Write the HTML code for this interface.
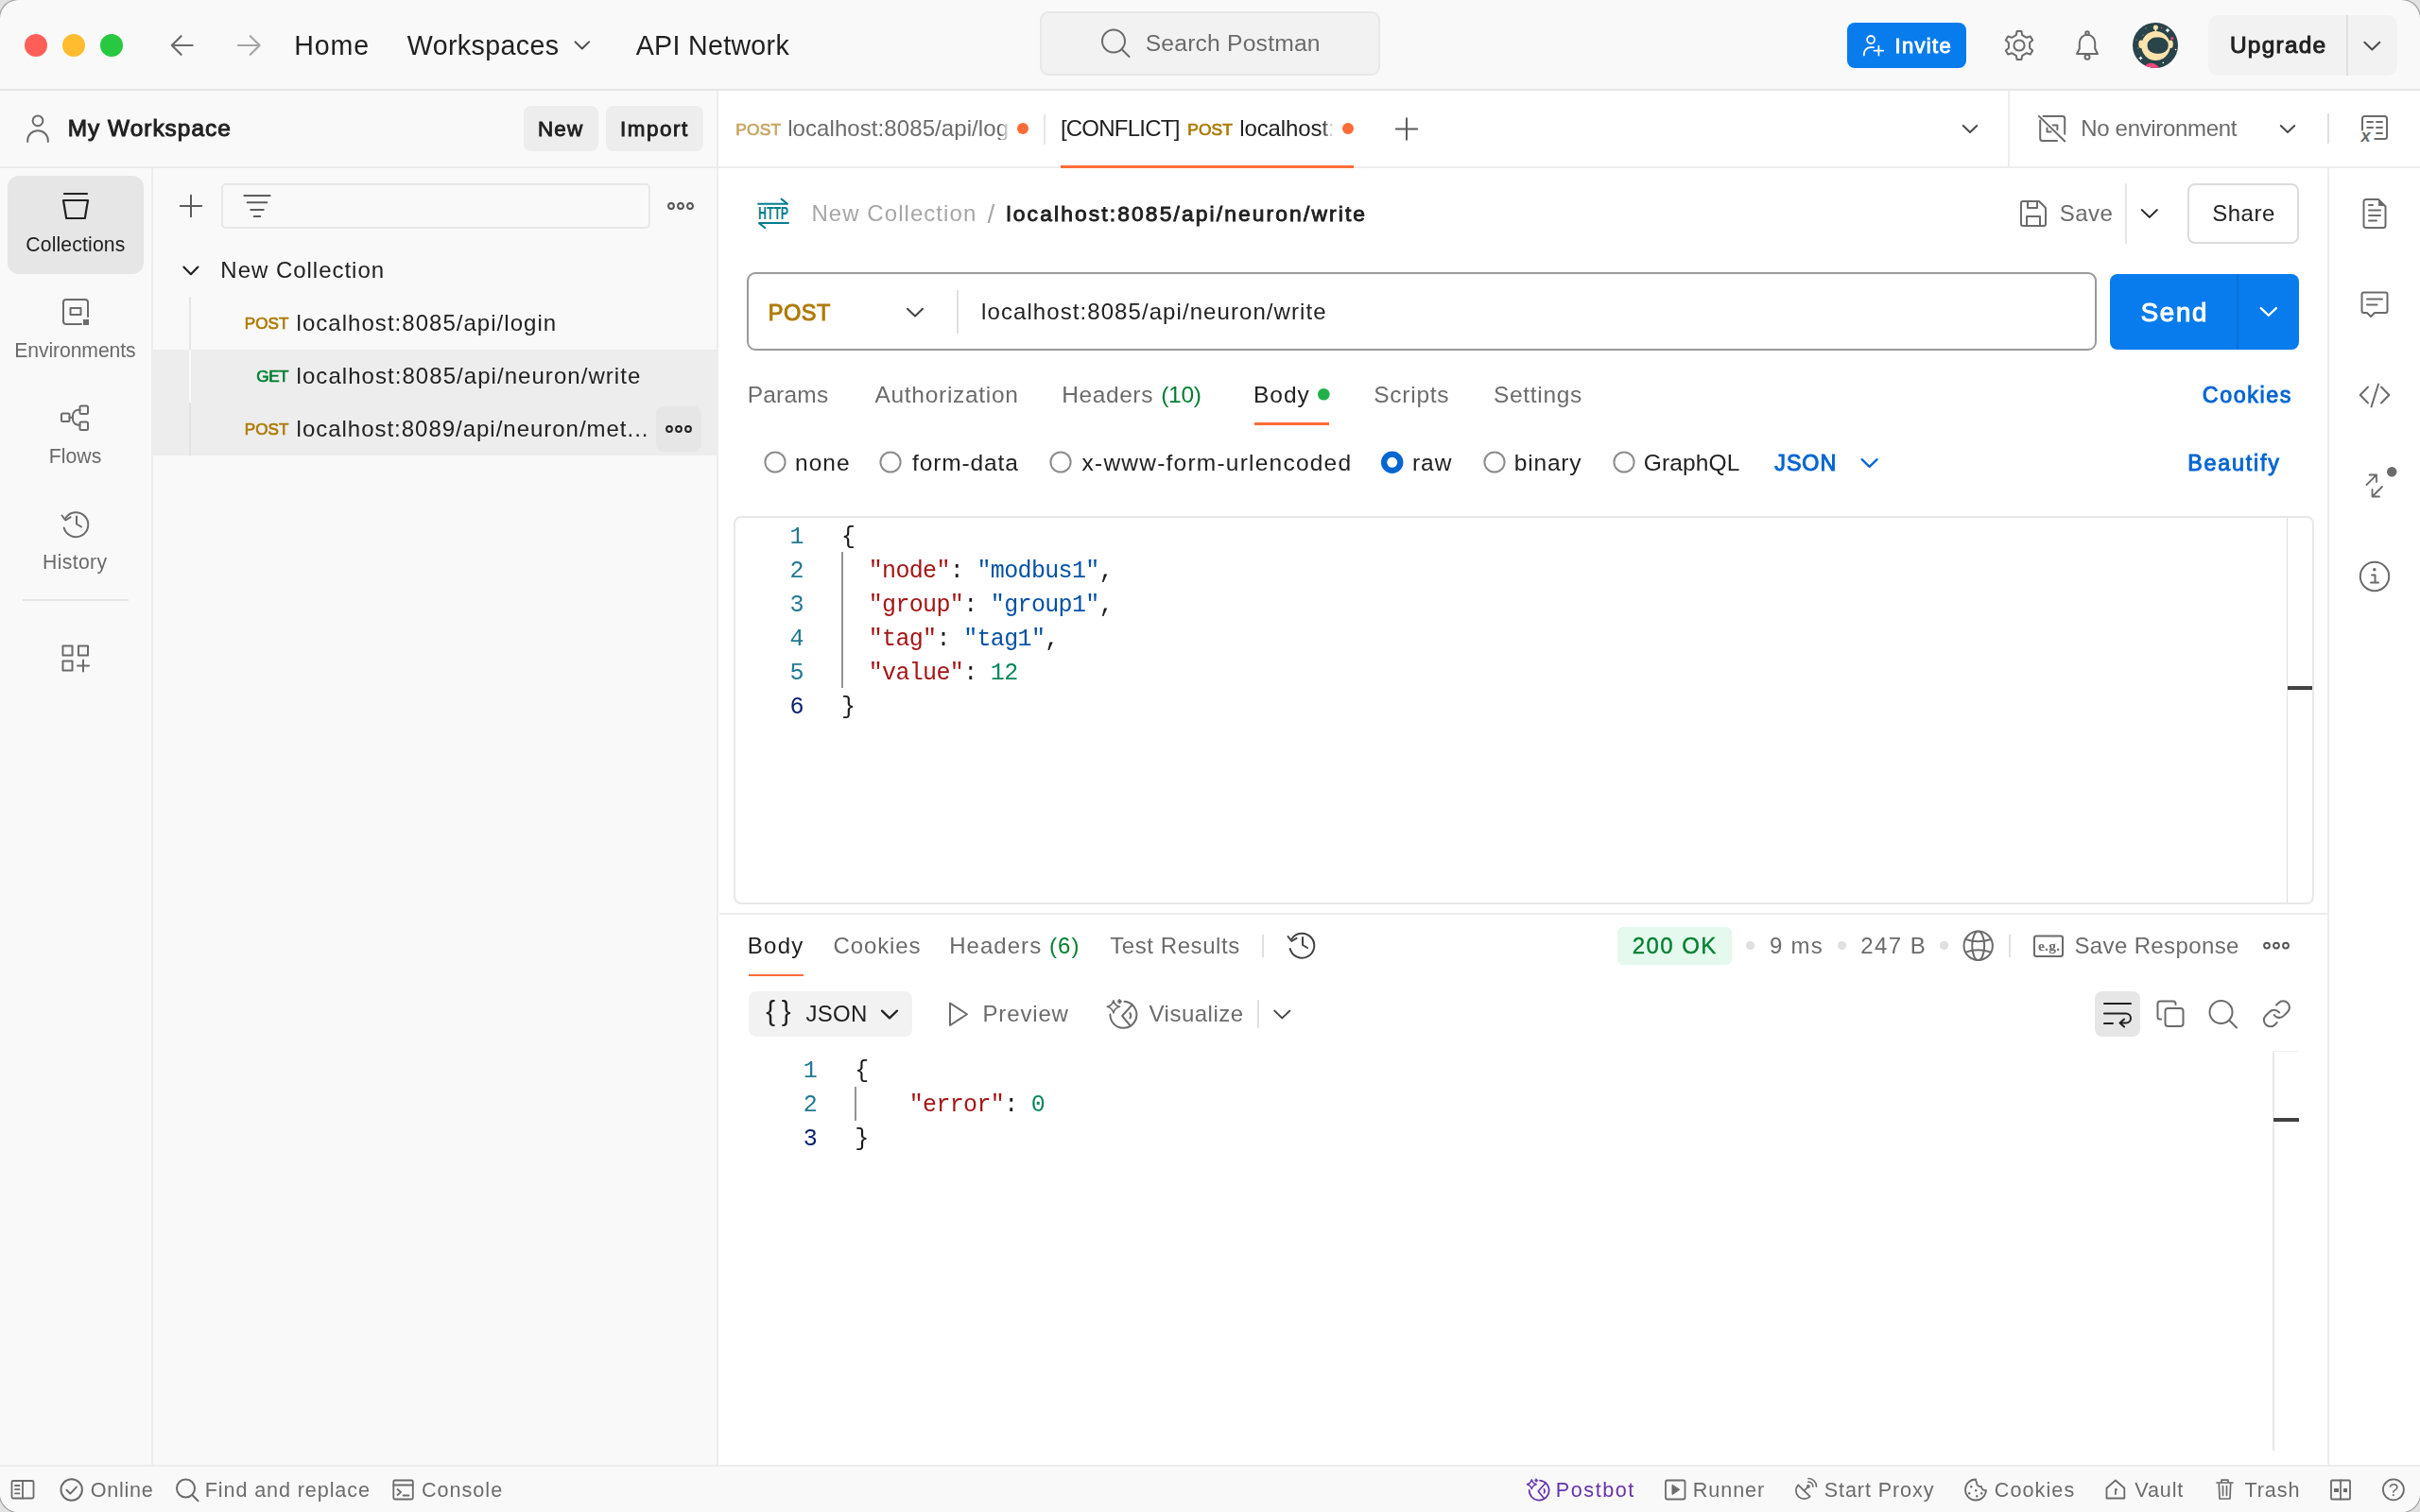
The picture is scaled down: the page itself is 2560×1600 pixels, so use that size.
<!DOCTYPE html>
<html lang="en"><head><meta charset="utf-8"><title>Postman</title>
<style>
html,body{margin:0;padding:0}
body{width:2560px;height:1600px;overflow:hidden;background:#e2e2e2;position:relative}
#win{position:absolute;left:0;top:0;width:2560px;height:1600px;background:#f9f9f9;border-radius:20px;overflow:hidden;box-shadow:0 0 0 1.5px #a8a8a8}
.b{position:absolute;box-sizing:border-box}
.t{position:absolute;white-space:pre;display:block}
.i{position:absolute;overflow:visible}
#tx{position:absolute;left:0;top:0;width:2560px;height:1600px;will-change:transform}
</style></head>
<body><div id="win">
<div class="b" style="left:760px;top:96px;width:1800px;height:1456px;background:#fff;"></div>
<div class="b" style="left:0px;top:94px;width:2560px;height:2px;background:#e6e6e6;"></div>
<div class="b" style="left:0px;top:176px;width:2560px;height:2px;background:#ededed;"></div>
<div class="b" style="left:758px;top:96px;width:2px;height:1456px;background:#ededed;"></div>
<div class="b" style="left:160px;top:178px;width:2px;height:1374px;background:#ededed;"></div>
<div class="b" style="left:2462px;top:178px;width:2px;height:1374px;background:#ededed;"></div>
<div class="b" style="left:2124px;top:96px;width:2px;height:80px;background:#ededed;"></div>
<div class="b" style="left:0px;top:1552px;width:2560px;height:48px;background:#f9f9f9;"></div>
<div class="b" style="left:0px;top:1550px;width:2560px;height:2px;background:#ededed;"></div>
<div class="b" style="left:1100px;top:12px;width:360px;height:68px;background:#f2f2f2;border-radius:9px;border:2px solid #e8e8e8;"></div>
<div class="b" style="left:1954px;top:24px;width:126px;height:48px;background:#087bed;border-radius:8px;"></div>
<div class="b" style="left:2336px;top:16px;width:200px;height:64px;background:#f2f2f2;border-radius:10px;"></div>
<div class="b" style="left:2482px;top:16px;width:2px;height:64px;background:#e0e0e0;"></div>
<div class="b" style="left:554px;top:112px;width:79px;height:48px;background:#ededed;border-radius:8px;"></div>
<div class="b" style="left:641px;top:112px;width:103px;height:48px;background:#ededed;border-radius:8px;"></div>
<div class="b" style="left:1104px;top:121px;width:2px;height:32px;background:#e6e6e6;"></div>
<div class="b" style="left:1122px;top:175.4px;width:310px;height:2.4px;background:#ff6c37;"></div>
<div class="b" style="left:2462px;top:120px;width:2px;height:32px;background:#e0e0e0;"></div>
<div class="b" style="left:8px;top:186px;width:144px;height:104px;background:#e6e6e6;border-radius:12px;"></div>
<div class="b" style="left:88px;top:338px;width:6px;height:6px;background:#6b6b6b;"></div>
<div class="b" style="left:24px;top:634px;width:112px;height:2px;background:#e6e6e6;"></div>
<div class="b" style="left:234px;top:194px;width:454px;height:48px;background:#f9f9f9;border-radius:5px;border:2px solid #e8e8e8;"></div>
<div class="b" style="left:162px;top:370px;width:596px;height:112px;background:#ededed;"></div>
<div class="b" style="left:200px;top:314px;width:2px;height:56px;background:#e6e6e6;"></div>
<div class="b" style="left:200px;top:370px;width:2px;height:56px;background:#fafafa;"></div>
<div class="b" style="left:200px;top:426px;width:2px;height:56px;background:#e3e3e3;"></div>
<div class="b" style="left:694px;top:430px;width:48px;height:48px;background:#e6e6e6;border-radius:8px;"></div>
<div class="b" style="left:2248px;top:194px;width:2px;height:64px;background:#e6e6e6;"></div>
<div class="b" style="left:2314px;top:194px;width:118px;height:64px;background:#fff;border-radius:8px;border:2px solid #dcdcdc;"></div>
<div class="b" style="left:790px;top:288px;width:1428px;height:83px;background:#fff;border-radius:9px;border:2px solid #9a9a9a;"></div>
<div class="b" style="left:1012px;top:307px;width:2px;height:46px;background:#e0e0e0;"></div>
<div class="b" style="left:2232px;top:290px;width:200px;height:80px;background:#087bed;border-radius:8px;"></div>
<div class="b" style="left:2366px;top:290px;width:2px;height:80px;background:#0a70da;"></div>
<div class="b" style="left:1327px;top:447.2px;width:79px;height:2.5px;background:#ff6c37;"></div>
<div class="b" style="left:776px;top:546px;width:1672px;height:411px;background:#fff;border-radius:8px;border:2px solid #e8e8e8;"></div>
<div class="b" style="left:2418.5px;top:548px;width:1px;height:407px;background:#dedede;"></div>
<div class="b" style="left:2419.5px;top:725.5px;width:26.5px;height:4.5px;background:#424242;"></div>
<div class="b" style="left:890px;top:584px;width:2px;height:144px;background:#939393;"></div>
<div class="b" style="left:761px;top:966px;width:1701px;height:2px;background:#ededed;"></div>
<div class="b" style="left:792px;top:1030.5px;width:58px;height:2.5px;background:#ff6c37;"></div>
<div class="b" style="left:1335px;top:989px;width:2px;height:24px;background:#e0e0e0;"></div>
<div class="b" style="left:1711px;top:981px;width:121px;height:40px;background:#e5f9ee;border-radius:6px;"></div>
<div class="b" style="left:2125px;top:989px;width:2px;height:24px;background:#e0e0e0;"></div>
<div class="b" style="left:792px;top:1049px;width:173px;height:48px;background:#f2f2f2;border-radius:8px;"></div>
<div class="b" style="left:1330px;top:1058px;width:2px;height:30px;background:#e0e0e0;"></div>
<div class="b" style="left:2216px;top:1049px;width:48px;height:48px;background:#e6e6e6;border-radius:8px;"></div>
<div class="b" style="left:2404px;top:1113px;width:2px;height:422px;background:#e8e8e8;"></div>
<div class="b" style="left:2404px;top:1112px;width:28px;height:1px;background:#f0f0f0;"></div>
<div class="b" style="left:2405px;top:1183px;width:27px;height:4px;background:#424242;"></div>
<div class="b" style="left:904px;top:1150px;width:2px;height:36px;background:#939393;"></div>
<div class="b" style="left:2469px;top:1574.5px;width:4.5px;height:4.5px;background:#6b6b6b;"></div>
<div class="b" style="left:2478.8px;top:1574.5px;width:4.5px;height:4.5px;background:#6b6b6b;"></div>
<svg class="i" style="left:26px;top:36px" width="24" height="24"><circle cx="12" cy="12" r="12" fill="#ff5f57"/></svg>
<svg class="i" style="left:66px;top:36px" width="24" height="24"><circle cx="12" cy="12" r="12" fill="#febc2e"/></svg>
<svg class="i" style="left:106px;top:36px" width="24" height="24"><circle cx="12" cy="12" r="12" fill="#28c840"/></svg>
<svg class="i" style="left:0;top:0" width="2560" height="1600" viewBox="0 0 2560 1600"><g fill="none" stroke="#6b6b6b" stroke-width="2.2" stroke-linecap="round" stroke-linejoin="round" stroke-linecap="butt" stroke-linejoin="miter"><path d="M203.6 48 H181.8 M191.6 38.2 L181.8 48 L191.6 57.8"/></g></svg>
<svg class="i" style="left:0;top:0" width="2560" height="1600" viewBox="0 0 2560 1600"><g fill="none" stroke="#a6a6a6" stroke-width="2.2" stroke-linecap="round" stroke-linejoin="round" stroke-linecap="butt" stroke-linejoin="miter"><path d="M252 48 H274.6 M264.8 38.2 L274.6 48 L264.8 57.8"/></g></svg>
<svg class="i" style="left:0;top:0" width="2560" height="1600" viewBox="0 0 2560 1600"><g fill="none" stroke="#4a4a4a" stroke-width="2" stroke-linecap="round" stroke-linejoin="round" stroke-linecap="butt" stroke-linejoin="miter"><path d="M608.55 44.35 L615.8 51.449999999999996 L623.05 44.35"/></g></svg>
<svg class="i" style="left:0;top:0" width="2560" height="1600" viewBox="0 0 2560 1600"><g fill="none" stroke="#6b6b6b" stroke-width="2" stroke-linecap="round" stroke-linejoin="round" ><circle cx="1178" cy="43.5" r="12"/><path d="M1186.8 52.3 L1194.5 60"/></g></svg>
<svg class="i" style="left:0;top:0" width="2560" height="1600" viewBox="0 0 2560 1600"><g fill="none" stroke="#fff" stroke-width="1.8" stroke-linecap="round" stroke-linejoin="round" stroke-linecap="butt"><circle cx="1979.1" cy="42" r="4"/><path d="M1971.8 58.4 v-1.200 a7 7 0 0 1 7 -7 h3.200"/><path d="M1982.5 53.6 h9.800 M1987.4 48.700 v9.800"/></g></svg>
<svg class="i" style="left:0;top:0" width="2560" height="1600" viewBox="0 0 2560 1600"><g fill="none" stroke="#6b6b6b" stroke-width="2" stroke-linecap="round" stroke-linejoin="round" ><path d="M2133.6 33.0 L2138.4 33.0 L2139.2 37.1 L2143.9 39.8 L2147.8 38.4 L2150.2 42.6 L2147.1 45.3 L2147.1 50.7 L2150.2 53.4 L2147.8 57.6 L2143.9 56.2 L2139.2 58.9 L2138.4 63.0 L2133.6 63.0 L2132.8 58.9 L2128.1 56.2 L2124.2 57.6 L2121.8 53.4 L2124.9 50.7 L2124.9 45.3 L2121.8 42.6 L2124.2 38.4 L2128.1 39.8 L2132.8 37.1 Z"/><circle cx="2136" cy="48" r="5.6"/></g></svg>
<svg class="i" style="left:0;top:0" width="2560" height="1600" viewBox="0 0 2560 1600"><g fill="none" stroke="#6b6b6b" stroke-width="2" stroke-linecap="round" stroke-linejoin="round" ><path d="M2197 57 h22 l-2.800 -5.500 v-6.500 a8.200 8.200 0 0 0 -16.400 0 v6.500 z"/><circle cx="2208" cy="60.300" r="2.500"/><circle cx="2208" cy="35" r="1.800"/></g></svg>
<svg class="i" style="left:2256px;top:24px" width="48" height="48" viewBox="0 0 48 48"><defs><clipPath id="av"><circle cx="24" cy="24" r="24"/></clipPath></defs><g clip-path="url(#av)"><rect width="48" height="48" fill="#29444a"/><circle cx="24.4" cy="5.1" r="2.6" fill="#fde3ac"/><rect x="23.6" y="6.5" width="1.600" height="3.500" fill="#fde3ac"/><ellipse cx="8.8" cy="22.8" rx="2.5" ry="4.2" fill="#fde3ac"/><ellipse cx="40.3" cy="22.8" rx="2.5" ry="4.2" fill="#fde3ac"/><ellipse cx="24.5" cy="24.5" rx="15.2" ry="15.6" fill="#fde3ac"/><rect x="15.6" y="15.6" width="22.100" height="17.100" rx="9.500" ry="8" fill="#29444a"/><circle cx="19.5" cy="52.2" r="9.4" fill="#f9497b"/><path d="M37 5.5 Q37.52 7.58 39.6 8.1 Q37.52 8.62 37 10.7 Q36.48 8.62 34.4 8.1 Q36.48 7.58 37 5.5 Z" fill="#fff"/><path d="M8.5 35.2 Q8.96 37.04 10.8 37.5 Q8.96 37.96 8.5 39.8 Q8.04 37.96 6.2 37.5 Q8.04 37.04 8.5 35.2 Z" fill="#fff"/><circle cx="45.6" cy="28.5" r="0.8" fill="#fff"/><circle cx="32.3" cy="42.4" r="0.8" fill="#fff"/><rect x="13.4" y="5.300" width="1.300" height="1.300" fill="#7a8a8c"/><rect x="10.300" y="12.600" width="1.300" height="1.300" fill="#7a8a8c"/><rect x="3.300" y="17.600" width="1.300" height="1.300" fill="#7a8a8c"/><rect x="5.100" y="26.300" width="1.300" height="1.300" fill="#7a8a8c"/><circle cx="30.5" cy="5.5" r="0.7" fill="#f9497b"/><circle cx="41.8" cy="16.6" r="1.5" fill="#f9497b"/></g></svg>
<svg class="i" style="left:0;top:0" width="2560" height="1600" viewBox="0 0 2560 1600"><g fill="none" stroke="#4a4a4a" stroke-width="2" stroke-linecap="round" stroke-linejoin="round" stroke-linecap="butt" stroke-linejoin="miter"><path d="M2501.3 44.7 L2509.3 52.5 L2517.3 44.7"/></g></svg>
<svg class="i" style="left:0;top:0" width="2560" height="1600" viewBox="0 0 2560 1600"><g fill="none" stroke="#6b6b6b" stroke-width="2" stroke-linecap="round" stroke-linejoin="round" stroke-linecap="butt"><circle cx="40" cy="127.8" r="5.4"/><path d="M29.2 150 v-1.5 a10.8 10.2 0 0 1 21.6 0 v1.5"/></g></svg>
<svg class="i" style="left:1076px;top:130px" width="12" height="12"><circle cx="6" cy="6" r="6" fill="#ff6c37"/></svg>
<svg class="i" style="left:1420px;top:130px" width="12" height="12"><circle cx="6" cy="6" r="6" fill="#ff6c37"/></svg>
<svg class="i" style="left:0;top:0" width="2560" height="1600" viewBox="0 0 2560 1600"><g fill="none" stroke="#5c5c5c" stroke-width="2" stroke-linecap="round" stroke-linejoin="round" stroke-linecap="butt"><path d="M1476.8 136.5 H1499.2 M1488 125.3 V147.7"/></g></svg>
<svg class="i" style="left:0;top:0" width="2560" height="1600" viewBox="0 0 2560 1600"><g fill="none" stroke="#4a4a4a" stroke-width="2" stroke-linecap="round" stroke-linejoin="round" stroke-linecap="butt" stroke-linejoin="miter"><path d="M2076.75 132.95 L2084 140.05 L2091.25 132.95"/></g></svg>
<svg class="i" style="left:0;top:0" width="2560" height="1600" viewBox="0 0 2560 1600"><g fill="none" stroke="#6b6b6b" stroke-width="2" stroke-linecap="round" stroke-linejoin="round" stroke-linecap="butt"><path d="M2161.5 122.9 H2181.7 a2.5 2.5 0 0 1 2.5 2.5 V141.8"/><path d="M2158.2 127.5 V146.4 a2.5 2.5 0 0 0 2.5 2.5 H2176"/><path d="M2156.9 122.9 L2184.3 149.5"/><path d="M2171.6 132.5 H2176.4 V137.3"/><path d="M2165.5 135.6 V139.4 H2169.6"/></g></svg>
<svg class="i" style="left:0;top:0" width="2560" height="1600" viewBox="0 0 2560 1600"><g fill="none" stroke="#4a4a4a" stroke-width="2" stroke-linecap="round" stroke-linejoin="round" stroke-linecap="butt" stroke-linejoin="miter"><path d="M2412.75 132.95 L2420 140.05 L2427.25 132.95"/></g></svg>
<svg class="i" style="left:0;top:0" width="2560" height="1600" viewBox="0 0 2560 1600"><g fill="none" stroke="#6b6b6b" stroke-width="2" stroke-linecap="round" stroke-linejoin="round" stroke-linecap="butt"><path d="M2499 137.6 V125.4 a2.5 2.5 0 0 1 2.5 -2.5 H2522.5 a2.5 2.5 0 0 1 2.5 2.5 V144.4 a2.5 2.5 0 0 1 -2.5 2.5 H2512.3"/><path d="M2504.2 129 h5.8 M2514.1 129 h5.8 M2504.2 135 h5.8 M2514.1 135 h5.8 M2514.1 140.9 h5.8"/></g></svg>
<svg class="i" style="left:2494px;top:132px" width="20" height="22"><text x="3.6" y="17.7" font-family="Liberation Sans, sans-serif" font-size="18.2" font-weight="700" font-style="italic" fill="#6b6b6b">x</text></svg>
<svg class="i" style="left:0;top:0" width="2560" height="1600" viewBox="0 0 2560 1600"><g fill="none" stroke="#212121" stroke-width="2.2" stroke-linecap="round" stroke-linejoin="round" stroke-linecap="butt" stroke-linejoin="miter"><path d="M68 205 h24"/><path d="M67 212 h26 l-3.2 19 h-19.6 z"/></g></svg>
<svg class="i" style="left:0;top:0" width="2560" height="1600" viewBox="0 0 2560 1600"><g fill="none" stroke="#6b6b6b" stroke-width="2" stroke-linecap="round" stroke-linejoin="round" stroke-linecap="butt"><path d="M86 343 h-16 a3 3 0 0 1 -3 -3 v-20 a3 3 0 0 1 3 -3 h20 a3 3 0 0 1 3 3 v15"/><rect x="74.5" y="326" width="11" height="7"/></g></svg>
<svg class="i" style="left:0;top:0" width="2560" height="1600" viewBox="0 0 2560 1600"><g fill="none" stroke="#6b6b6b" stroke-width="2" stroke-linecap="round" stroke-linejoin="round" ><rect x="65" y="437.5" width="8.5" height="8.5" rx="1.5"/><rect x="84.5" y="429.5" width="8.5" height="8.5" rx="1.5"/><rect x="84.5" y="446.5" width="8.5" height="8.5" rx="1.5"/><path d="M73.5 441.7 h2 M84.5 433.7 h-1.5 a6 6 0 0 0 -6 6 v4 a6 6 0 0 0 6 6 h1.5"/></g></svg>
<svg class="i" style="left:0;top:0" width="2560" height="1600" viewBox="0 0 2560 1600"><g fill="none" stroke="#6b6b6b" stroke-width="2" stroke-linecap="round" stroke-linejoin="round" stroke-linecap="butt"><path d="M69.5 548 a13 13 0 1 1 -1.8 10.5"/><path d="M65.5 545.5 l3.8 5 l5.2 -3.2"/><path d="M81 546.5 v8 l5 3"/></g></svg>
<svg class="i" style="left:0;top:0" width="2560" height="1600" viewBox="0 0 2560 1600"><g fill="none" stroke="#6b6b6b" stroke-width="2" stroke-linecap="round" stroke-linejoin="round" stroke-linecap="butt" stroke-linejoin="miter"><rect x="66.5" y="683.5" width="10" height="10"/><rect x="83" y="683.5" width="10" height="10"/><rect x="66.5" y="699.5" width="10" height="10"/><path d="M82 704.5 h12 M88 698.5 v12"/></g></svg>
<svg class="i" style="left:0;top:0" width="2560" height="1600" viewBox="0 0 2560 1600"><g fill="none" stroke="#5c5c5c" stroke-width="2" stroke-linecap="round" stroke-linejoin="round" stroke-linecap="butt"><path d="M190.8 218 H213.2 M202 206.8 V229.2"/></g></svg>
<svg class="i" style="left:0;top:0" width="2560" height="1600" viewBox="0 0 2560 1600"><g fill="none" stroke="#5c5c5c" stroke-width="2" stroke-linecap="round" stroke-linejoin="round" stroke-linecap="butt"><path d="M258.400 207 h27.200 M261.700 214.200 h20.600 M265.300 222.100 h13.400 M268.700 229 h6.600"/></g></svg>
<svg class="i" style="left:0;top:0" width="2560" height="1600" viewBox="0 0 2560 1600"><g fill="none" stroke="#555" stroke-width="2" stroke-linecap="round" stroke-linejoin="round" ><circle cx="710" cy="218" r="2.9"/><circle cx="720" cy="218" r="2.9"/><circle cx="730" cy="218" r="2.9"/></g></svg>
<svg class="i" style="left:0;top:0" width="2560" height="1600" viewBox="0 0 2560 1600"><g fill="none" stroke="#212121" stroke-width="2.2" stroke-linecap="round" stroke-linejoin="round" stroke-linecap="butt" stroke-linejoin="miter"><path d="M194.4 282.59999999999997 L201.9 290.2 L209.4 282.59999999999997"/></g></svg>
<svg class="i" style="left:0;top:0" width="2560" height="1600" viewBox="0 0 2560 1600"><g fill="none" stroke="#212121" stroke-width="2" stroke-linecap="round" stroke-linejoin="round" ><circle cx="708" cy="454" r="2.9"/><circle cx="718" cy="454" r="2.9"/><circle cx="728" cy="454" r="2.9"/></g></svg>
<svg class="i" style="left:0;top:0" width="2560" height="1600" viewBox="0 0 2560 1600"><g fill="none" stroke="#067d8e" stroke-width="2" stroke-linecap="round" stroke-linejoin="round" stroke-linecap="butt" stroke-linejoin="miter"><path d="M802.1 215.8 H833 L826.6 210.6"/><path d="M834 236.1 H803 L809.4 241.2"/></g></svg>
<svg class="i" style="left:800px;top:216px" width="38" height="20"><text x="2.1" y="16.3" font-family="Liberation Sans, sans-serif" font-size="18" font-weight="700" fill="#067d8e" textLength="31.9" lengthAdjust="spacingAndGlyphs">HTTP</text></svg>
<svg class="i" style="left:0;top:0" width="2560" height="1600" viewBox="0 0 2560 1600"><g fill="none" stroke="#6b6b6b" stroke-width="2" stroke-linecap="round" stroke-linejoin="round" stroke-linecap="butt"><path d="M2138 215 a2 2 0 0 1 2 -2 h17 l7 7 v17 a2 2 0 0 1 -2 2 h-22 a2 2 0 0 1 -2 -2 z"/><path d="M2145 213 v7 h10 v-7"/><path d="M2144 239 v-10 h14 v10"/></g></svg>
<svg class="i" style="left:0;top:0" width="2560" height="1600" viewBox="0 0 2560 1600"><g fill="none" stroke="#212121" stroke-width="2" stroke-linecap="round" stroke-linejoin="round" stroke-linecap="butt" stroke-linejoin="miter"><path d="M2265.8 222.1 L2273.8 229.9 L2281.8 222.1"/></g></svg>
<svg class="i" style="left:0;top:0" width="2560" height="1600" viewBox="0 0 2560 1600"><g fill="none" stroke="#424242" stroke-width="2" stroke-linecap="round" stroke-linejoin="round" stroke-linecap="butt" stroke-linejoin="miter"><path d="M960.0 326.70000000000005 L968 334.5 L976.0 326.70000000000005"/></g></svg>
<svg class="i" style="left:0;top:0" width="2560" height="1600" viewBox="0 0 2560 1600"><g fill="none" stroke="#fff" stroke-width="2.4" stroke-linecap="round" stroke-linejoin="round" stroke-linecap="butt" stroke-linejoin="miter"><path d="M2391.75 326.04999999999995 L2399.8 333.75 L2407.8500000000004 326.04999999999995"/></g></svg>
<svg class="i" style="left:1394.0px;top:411.4px" width="12.6" height="12.6"><circle cx="6.3" cy="6.3" r="6.3" fill="#21b04b"/></svg>
<svg class="i" style="left:807px;top:476.3px" width="26" height="26"><circle cx="13" cy="13" r="10.6" fill="#fff" stroke="#8c8c8c" stroke-width="2"/></svg>
<svg class="i" style="left:928.7px;top:476.3px" width="26" height="26"><circle cx="13" cy="13" r="10.6" fill="#fff" stroke="#8c8c8c" stroke-width="2"/></svg>
<svg class="i" style="left:1109px;top:476.3px" width="26" height="26"><circle cx="13" cy="13" r="10.6" fill="#fff" stroke="#8c8c8c" stroke-width="2"/></svg>
<svg class="i" style="left:0;top:0" width="2560" height="1600" viewBox="0 0 2560 1600"><g fill="none" stroke="#0265d2" stroke-width="6.2" stroke-linecap="round" stroke-linejoin="round" ><circle cx="1472.7" cy="489.3" r="8.6"/></g></svg>
<svg class="i" style="left:1568px;top:476.3px" width="26" height="26"><circle cx="13" cy="13" r="10.6" fill="#fff" stroke="#8c8c8c" stroke-width="2"/></svg>
<svg class="i" style="left:1704.6px;top:476.3px" width="26" height="26"><circle cx="13" cy="13" r="10.6" fill="#fff" stroke="#8c8c8c" stroke-width="2"/></svg>
<svg class="i" style="left:0;top:0" width="2560" height="1600" viewBox="0 0 2560 1600"><g fill="none" stroke="#0265d2" stroke-width="2.2" stroke-linecap="round" stroke-linejoin="round" stroke-linecap="butt" stroke-linejoin="miter"><path d="M1969.6 486.1 L1977.6 493.9 L1985.6 486.1"/></g></svg>
<svg class="i" style="left:0;top:0" width="2560" height="1600" viewBox="0 0 2560 1600"><g fill="none" stroke="#424242" stroke-width="2" stroke-linecap="round" stroke-linejoin="round" stroke-linecap="butt"><path d="M1366.5 993.5 a13 13 0 1 1 -1.8 10.5"/><path d="M1362.5 991 l3.8 5 l5.2 -3.2"/><path d="M1378 992 v8 l5 3"/></g></svg>
<svg class="i" style="left:1847.1000000000001px;top:996.0px" width="9.2" height="9.2"><circle cx="4.6" cy="4.6" r="4.6" fill="#e0e0e0"/></svg>
<svg class="i" style="left:1943.6000000000001px;top:996.0px" width="9.2" height="9.2"><circle cx="4.6" cy="4.6" r="4.6" fill="#e0e0e0"/></svg>
<svg class="i" style="left:2052.2000000000003px;top:996.0px" width="9.2" height="9.2"><circle cx="4.6" cy="4.6" r="4.6" fill="#e0e0e0"/></svg>
<svg class="i" style="left:0;top:0" width="2560" height="1600" viewBox="0 0 2560 1600"><g fill="none" stroke="#6b6b6b" stroke-width="2" stroke-linecap="round" stroke-linejoin="round" ><circle cx="2092.7" cy="1000.8" r="15.2"/><ellipse cx="2092.7" cy="1000.8" rx="6.5" ry="15.2"/><path d="M2079.5 994 q13 4.5 26.4 0 M2079.5 1007.6 q13 -4.5 26.4 0"/></g></svg>
<svg class="i" style="left:0;top:0" width="2560" height="1600" viewBox="0 0 2560 1600"><g fill="none" stroke="#6b6b6b" stroke-width="2" stroke-linecap="round" stroke-linejoin="round" ><rect x="2152" y="990.5" width="30" height="21.5" rx="2"/></g></svg>
<svg class="i" style="left:0;top:0" width="2560" height="1600" viewBox="0 0 2560 1600"><g fill="none" stroke="#555" stroke-width="2" stroke-linecap="round" stroke-linejoin="round" ><circle cx="2398" cy="1000.6" r="2.9"/><circle cx="2408" cy="1000.6" r="2.9"/><circle cx="2418" cy="1000.6" r="2.9"/></g></svg>
<svg class="i" style="left:0;top:0" width="2560" height="1600" viewBox="0 0 2560 1600"><g fill="none" stroke="#212121" stroke-width="2.2" stroke-linecap="round" stroke-linejoin="round" stroke-linecap="butt" stroke-linejoin="miter"><path d="M933.0 1069.6 L941 1077.4 L949.0 1069.6"/></g></svg>
<svg class="i" style="left:0;top:0" width="2560" height="1600" viewBox="0 0 2560 1600"><g fill="none" stroke="#6b6b6b" stroke-width="2" stroke-linecap="round" stroke-linejoin="round" stroke-linejoin="round"><path d="M1005 1061.5 v23.5 l18 -11.75 z"/></g></svg>
<svg class="i" style="left:0;top:0" width="2560" height="1600" viewBox="0 0 2560 1600"><g fill="none" stroke="#6b6b6b" stroke-width="2" stroke-linecap="round" stroke-linejoin="round" ><path d="M1189.50 1059.85 A14 14 0 1 1 1174.40 1073.40"/><path d="M1197.70 1063.40 L1187.10 1075.00 L1195.80 1085.60"/><path d="M1195.40 1072.10 Q1197.20 1074.80 1195.40 1077.50"/><path d="M1177.90 1058.70 Q1179.20 1064.00 1184.50 1065.30 Q1179.20 1066.60 1177.90 1071.90 Q1176.60 1066.60 1171.30 1065.30 Q1176.60 1064.00 1177.90 1058.70 Z" stroke-width="1.6"/><path d="M1184.40 1057.30 L1186.70 1059.80 L1184.40 1062.30 L1182.10 1059.80 Z" fill="#6b6b6b" stroke-width="0.6"/></g></svg>
<svg class="i" style="left:0;top:0" width="2560" height="1600" viewBox="0 0 2560 1600"><g fill="none" stroke="#424242" stroke-width="2" stroke-linecap="round" stroke-linejoin="round" stroke-linecap="butt" stroke-linejoin="miter"><path d="M1348.3 1069.6 L1356.3 1077.4 L1364.3 1069.6"/></g></svg>
<svg class="i" style="left:0;top:0" width="2560" height="1600" viewBox="0 0 2560 1600"><g fill="none" stroke="#212121" stroke-width="2" stroke-linecap="round" stroke-linejoin="round" stroke-linecap="butt"><path d="M2226 1062 h28 M2226 1072.5 h23 a5 5 0 0 1 0 10 h-6 M2226 1083 h9 M2247 1078.5 l-4.5 4 l4.5 4"/></g></svg>
<svg class="i" style="left:0;top:0" width="2560" height="1600" viewBox="0 0 2560 1600"><g fill="none" stroke="#6b6b6b" stroke-width="2" stroke-linecap="round" stroke-linejoin="round" ><rect x="2290.5" y="1067" width="19" height="19" rx="3"/><path d="M2286 1078.5 h-1 a2.5 2.5 0 0 1 -2.5 -2.5 v-14 a2.5 2.5 0 0 1 2.5 -2.5 h14 a2.5 2.5 0 0 1 2.5 2.5 v1"/></g></svg>
<svg class="i" style="left:0;top:0" width="2560" height="1600" viewBox="0 0 2560 1600"><g fill="none" stroke="#6b6b6b" stroke-width="2" stroke-linecap="round" stroke-linejoin="round" ><circle cx="2349.5" cy="1071" r="12"/><path d="M2358.3 1079.8 L2366 1087.5"/></g></svg>
<svg class="i" style="left:0;top:0" width="2560" height="1600" viewBox="0 0 2560 1600"><g fill="none" stroke="#6b6b6b" stroke-width="2" stroke-linecap="round" stroke-linejoin="round" ><g transform="translate(2408.4 1072.8) scale(1.36) translate(-12 -12)" stroke-width="1.5"><path d="M10 13a5 5 0 0 0 7.54.54l3-3a5 5 0 0 0-7.07-7.07l-1.72 1.71"/><path d="M14 11a5 5 0 0 0-7.54-.54l-3 3a5 5 0 0 0 7.07 7.07l1.71-1.71"/></g></g></svg>
<svg class="i" style="left:0;top:0" width="2560" height="1600" viewBox="0 0 2560 1600"><g fill="none" stroke="#6b6b6b" stroke-width="2" stroke-linecap="round" stroke-linejoin="round" stroke-linecap="butt"><path d="M2500.5 213.5 a2.5 2.5 0 0 1 2.5 -2.5 h13 l7.5 7.5 v20 a2.5 2.5 0 0 1 -2.5 2.5 h-18 a2.5 2.5 0 0 1 -2.5 -2.5 z"/><path d="M2506 217 h4 M2506 222.5 h12 M2506 228 h12 M2506 233.5 h8"/></g></svg>
<svg class="i" style="left:0;top:0" width="2560" height="1600" viewBox="0 0 2560 1600"><g fill="none" stroke="#6b6b6b" stroke-width="1" stroke-linecap="round" stroke-linejoin="round" ><path d="M2516.5 211.5 v6 h6 z" fill="#6b6b6b" stroke-width="1"/></g></svg>
<svg class="i" style="left:0;top:0" width="2560" height="1600" viewBox="0 0 2560 1600"><g fill="none" stroke="#6b6b6b" stroke-width="2" stroke-linecap="round" stroke-linejoin="round" stroke-linecap="butt"><path d="M2498.5 311.5 a2 2 0 0 1 2 -2 h23 a2 2 0 0 1 2 2 v17.5 a2 2 0 0 1 -2 2 h-11.5 l-4 4 l-4 -4 h-3.500 a2 2 0 0 1 -2 -2 z"/><path d="M2504 316.5 h16 M2504 322.5 h10.5"/></g></svg>
<svg class="i" style="left:0;top:0" width="2560" height="1600" viewBox="0 0 2560 1600"><g fill="none" stroke="#6b6b6b" stroke-width="2" stroke-linecap="round" stroke-linejoin="round" stroke-linecap="butt" stroke-linejoin="miter"><path d="M2505 409.5 l-8.3 8.5 l8.3 8.5 M2519 409.5 l8.3 8.5 l-8.3 8.5 M2516 406.5 l-7.5 24"/></g></svg>
<svg class="i" style="left:0;top:0" width="2560" height="1600" viewBox="0 0 2560 1600"><g fill="none" stroke="#6b6b6b" stroke-width="1.8" stroke-linecap="round" stroke-linejoin="round" stroke-linecap="butt" stroke-linejoin="miter"><path d="M2503.5 513 l10.5 -10.5 M2506.5 502.5 h7.5 v7.500 M2520 515 l-10.5 10.5 M2517 525.500 h-7.500 v-7.500"/></g></svg>
<svg class="i" style="left:2525.4px;top:494.0px" width="10.4" height="10.4"><circle cx="5.2" cy="5.2" r="5.2" fill="#6b6b6b"/></svg>
<svg class="i" style="left:0;top:0" width="2560" height="1600" viewBox="0 0 2560 1600"><g fill="none" stroke="#6b6b6b" stroke-width="2" stroke-linecap="round" stroke-linejoin="round" stroke-linecap="butt"><circle cx="2512" cy="610" r="15.2"/><path d="M2509 608.5 h3.5 v8 M2508 616.5 h8"/></g></svg>
<svg class="i" style="left:2510.2px;top:600.9000000000001px" width="3.6" height="3.6"><circle cx="1.8" cy="1.8" r="1.8" fill="#6b6b6b"/></svg>
<svg class="i" style="left:0;top:0" width="2560" height="1600" viewBox="0 0 2560 1600"><g fill="none" stroke="#6b6b6b" stroke-width="1.8" stroke-linecap="round" stroke-linejoin="round" stroke-linecap="butt"><rect x="12.5" y="1567" width="23" height="18.5" rx="1.5"/><path d="M24 1567 v18.5 M16 1572 h4.5 M16 1576.2 h4.5 M16 1580.4 h4.5"/></g></svg>
<svg class="i" style="left:0;top:0" width="2560" height="1600" viewBox="0 0 2560 1600"><g fill="none" stroke="#6b6b6b" stroke-width="2" stroke-linecap="round" stroke-linejoin="round" ><circle cx="75.7" cy="1576.5" r="11.2"/><path d="M70.5 1576.8 l3.8 3.8 l6.6 -7"/></g></svg>
<svg class="i" style="left:0;top:0" width="2560" height="1600" viewBox="0 0 2560 1600"><g fill="none" stroke="#6b6b6b" stroke-width="2" stroke-linecap="round" stroke-linejoin="round" ><circle cx="196.5" cy="1575" r="9.5"/><path d="M203.3 1582 L209.5 1588.2"/></g></svg>
<svg class="i" style="left:0;top:0" width="2560" height="1600" viewBox="0 0 2560 1600"><g fill="none" stroke="#6b6b6b" stroke-width="1.8" stroke-linecap="round" stroke-linejoin="round" stroke-linecap="butt"><rect x="416.3" y="1566.5" width="20.5" height="20" rx="1.5"/><path d="M416.3 1571.5 h20.5 M420.5 1576 l3.5 3 l-3.5 3 M426.5 1582.5 h6"/></g></svg>
<svg class="i" style="left:0;top:0" width="2560" height="1600" viewBox="0 0 2560 1600"><g fill="none" stroke="#6534ad" stroke-width="1.7" stroke-linecap="round" stroke-linejoin="round" ><path d="M1629.00 1566.64 A10.5 10.5 0 1 1 1617.67 1576.80"/><path d="M1635.15 1569.30 L1627.20 1578.00 L1633.72 1585.95"/><path d="M1633.42 1575.82 Q1634.77 1577.85 1633.42 1579.88"/><path d="M1620.30 1565.77 Q1621.27 1569.75 1625.25 1570.72 Q1621.27 1571.70 1620.30 1575.67 Q1619.32 1571.70 1615.35 1570.72 Q1619.32 1569.75 1620.30 1565.77 Z" stroke-width="1.36"/><path d="M1625.17 1564.72 L1626.90 1566.60 L1625.17 1568.47 L1623.45 1566.60 Z" fill="#6534ad" stroke-width="0.6"/></g></svg>
<svg class="i" style="left:0;top:0" width="2560" height="1600" viewBox="0 0 2560 1600"><g fill="none" stroke="#6b6b6b" stroke-width="1.8" stroke-linecap="round" stroke-linejoin="round" ><rect x="1762" y="1566.5" width="20.5" height="20" rx="2"/><path d="M1769 1571.5 v10 l7.5 -5 z" fill="#6b6b6b" stroke-width="1"/></g></svg>
<svg class="i" style="left:0;top:0" width="2560" height="1600" viewBox="0 0 2560 1600"><g fill="none" stroke="#6b6b6b" stroke-width="1.7" stroke-linecap="round" stroke-linejoin="round" ><path d="M1902.3 1571.3 L1914.7 1583.7 A8.77 8.77 0 0 1 1902.3 1571.3 Z"/><path d="M1908.5 1577.5 L1912 1574"/><path d="M1913 1568.2 A4.8 4.8 0 0 1 1917.800 1573 M1913 1564.5 A8.5 8.5 0 0 1 1921.500 1573"/></g></svg>
<svg class="i" style="left:1910.8999999999999px;top:1571.3px" width="3.8" height="3.8"><circle cx="1.9" cy="1.9" r="1.9" fill="#6b6b6b"/></svg>
<svg class="i" style="left:0;top:0" width="2560" height="1600" viewBox="0 0 2560 1600"><g fill="none" stroke="#6b6b6b" stroke-width="1.8" stroke-linecap="round" stroke-linejoin="round" ><path d="M2090 1565.5 a11 11 0 1 0 11 11.5 a4 4 0 0 1 -5 -4 a4 4 0 0 1 -5 -4.5 a3.5 3.5 0 0 1 -1 -3 z"/></g></svg>
<svg class="i" style="left:2083.8px;top:1571.8px" width="2.4" height="2.4"><circle cx="1.2" cy="1.2" r="1.2" fill="#6b6b6b"/></svg>
<svg class="i" style="left:2082.3px;top:1579.3px" width="2.4" height="2.4"><circle cx="1.2" cy="1.2" r="1.2" fill="#6b6b6b"/></svg>
<svg class="i" style="left:2088.8px;top:1576.3px" width="2.4" height="2.4"><circle cx="1.2" cy="1.2" r="1.2" fill="#6b6b6b"/></svg>
<svg class="i" style="left:2089.8px;top:1582.3px" width="2.4" height="2.4"><circle cx="1.2" cy="1.2" r="1.2" fill="#6b6b6b"/></svg>
<svg class="i" style="left:2094.8px;top:1578.8px" width="2.4" height="2.4"><circle cx="1.2" cy="1.2" r="1.2" fill="#6b6b6b"/></svg>
<svg class="i" style="left:0;top:0" width="2560" height="1600" viewBox="0 0 2560 1600"><g fill="none" stroke="#6b6b6b" stroke-width="1.8" stroke-linecap="round" stroke-linejoin="round" ><path d="M2228.5 1585.5 v-10.8 l9.4 -8.2 l9.400 8.2 v10.8 z"/><path d="M2237.9 1577.5 v3.5"/></g></svg>
<svg class="i" style="left:2236.5px;top:1574.8999999999999px" width="2.8" height="2.8"><circle cx="1.4" cy="1.4" r="1.4" fill="#6b6b6b"/></svg>
<svg class="i" style="left:0;top:0" width="2560" height="1600" viewBox="0 0 2560 1600"><g fill="none" stroke="#6b6b6b" stroke-width="1.7" stroke-linecap="round" stroke-linejoin="round" stroke-linecap="butt"><path d="M2345 1569 h17 M2350 1569 v-2.800 h7 v2.800 M2347.3 1569 l0.7 17 h11 l0.700 -17 M2351.5 1572.5 v10 M2355.5 1572.5 v10"/></g></svg>
<svg class="i" style="left:0;top:0" width="2560" height="1600" viewBox="0 0 2560 1600"><g fill="none" stroke="#6b6b6b" stroke-width="1.8" stroke-linecap="round" stroke-linejoin="round" ><rect x="2466" y="1566.5" width="20" height="20" rx="1"/><path d="M2476 1566.5 v20"/></g></svg>
<svg class="i" style="left:0;top:0" width="2560" height="1600" viewBox="0 0 2560 1600"><g fill="none" stroke="#6b6b6b" stroke-width="1.8" stroke-linecap="round" stroke-linejoin="round" ><circle cx="2531.9" cy="1576.3" r="11"/></g></svg>
<div id="tx">
<span class="t" style="left:311.25px;top:33.80px;font:400 28.6px/1 'Liberation Sans', sans-serif;color:#212121;letter-spacing:0.879px;">Home</span>
<span class="t" style="left:430.77px;top:33.80px;font:400 28.6px/1 'Liberation Sans', sans-serif;color:#212121;letter-spacing:0.396px;">Workspaces</span>
<span class="t" style="left:672.64px;top:33.80px;font:400 28.6px/1 'Liberation Sans', sans-serif;color:#212121;letter-spacing:0.321px;">API Network</span>
<span class="t" style="left:1211.68px;top:34.20px;font:400 24.7px/1 'Liberation Sans', sans-serif;color:#6b6b6b;letter-spacing:0.185px;">Search Postman</span>
<span class="t" style="left:2004.41px;top:37.90px;font:400 22.04px/1 'Liberation Sans', sans-serif;color:#fff;letter-spacing:1.352px;-webkit-text-stroke:0.88px #fff;">Invite</span>
<span class="t" style="left:2359.01px;top:36.00px;font:400 24.41px/1 'Liberation Sans', sans-serif;color:#212121;letter-spacing:1.244px;-webkit-text-stroke:0.98px #212121;">Upgrade</span>
<span class="t" style="left:71.69px;top:123.90px;font:400 24.41px/1 'Liberation Sans', sans-serif;color:#212121;letter-spacing:1.014px;-webkit-text-stroke:0.98px #212121;">My Workspace</span>
<span class="t" style="left:569.11px;top:126.20px;font:400 22.42px/1 'Liberation Sans', sans-serif;color:#212121;letter-spacing:1.080px;-webkit-text-stroke:0.90px #212121;">New</span>
<span class="t" style="left:655.88px;top:126.20px;font:400 22.42px/1 'Liberation Sans', sans-serif;color:#212121;letter-spacing:1.567px;-webkit-text-stroke:0.90px #212121;">Import</span>
<span class="t" style="left:778.22px;top:128.60px;font:400 17.39px/1 'Liberation Sans', sans-serif;color:#c8a564;letter-spacing:0.206px;-webkit-text-stroke:0.70px #c8a564;">POST</span>
<span class="t" style="left:833.18px;top:124.20px;font:400 24px/1 'Liberation Sans', sans-serif;color:#6b6b6b;letter-spacing:0.081px;width:234.8px;overflow:hidden;-webkit-mask-image:linear-gradient(to right,#000 96%,transparent 100%);mask-image:linear-gradient(to right,#000 96%,transparent 100%);">localhost:8085/api/login</span>
<span class="t" style="left:1121.89px;top:124.20px;font:400 24px/1 'Liberation Sans', sans-serif;color:#212121;letter-spacing:-0.758px;">[CONFLICT]</span>
<span class="t" style="left:1256.22px;top:128.60px;font:400 17.39px/1 'Liberation Sans', sans-serif;color:#ad7a03;letter-spacing:0.073px;-webkit-text-stroke:0.70px #ad7a03;">POST</span>
<span class="t" style="left:1311.18px;top:124.20px;font:400 24px/1 'Liberation Sans', sans-serif;color:#212121;letter-spacing:-0.098px;width:99.8px;overflow:hidden;-webkit-mask-image:linear-gradient(to right,#000 88%,transparent 100%);mask-image:linear-gradient(to right,#000 88%,transparent 100%);">localhost:8085/api/neuron/write</span>
<span class="t" style="left:2201.23px;top:124.40px;font:400 24px/1 'Liberation Sans', sans-serif;color:#6b6b6b;letter-spacing:-0.321px;">No environment</span>
<span class="t" style="left:27.32px;top:247.90px;font:400 21.2px/1 'Liberation Sans', sans-serif;color:#212121;letter-spacing:0.140px;">Collections</span>
<span class="t" style="left:15.16px;top:360.00px;font:400 21.2px/1 'Liberation Sans', sans-serif;color:#6b6b6b;letter-spacing:-0.095px;">Environments</span>
<span class="t" style="left:51.66px;top:472.00px;font:400 21.2px/1 'Liberation Sans', sans-serif;color:#6b6b6b;letter-spacing:0.094px;">Flows</span>
<span class="t" style="left:45.06px;top:584.00px;font:400 21.2px/1 'Liberation Sans', sans-serif;color:#6b6b6b;letter-spacing:0.343px;">History</span>
<span class="t" style="left:233.33px;top:273.80px;font:400 24px/1 'Liberation Sans', sans-serif;color:#212121;letter-spacing:0.973px;">New Collection</span>
<span class="t" style="left:258.64px;top:333.90px;font:400 17.1px/1 'Liberation Sans', sans-serif;color:#ad7a03;letter-spacing:0.121px;-webkit-text-stroke:0.68px #ad7a03;">POST</span>
<span class="t" style="left:313.58px;top:329.70px;font:400 24px/1 'Liberation Sans', sans-serif;color:#212121;letter-spacing:1.031px;">localhost:8085/api/login</span>
<span class="t" style="left:271.28px;top:389.90px;font:400 17.1px/1 'Liberation Sans', sans-serif;color:#007f31;letter-spacing:-0.436px;-webkit-text-stroke:0.68px #007f31;">GET</span>
<span class="t" style="left:313.58px;top:385.70px;font:400 24px/1 'Liberation Sans', sans-serif;color:#212121;letter-spacing:1.049px;">localhost:8085/api/neuron/write</span>
<span class="t" style="left:258.64px;top:445.90px;font:400 17.1px/1 'Liberation Sans', sans-serif;color:#ad7a03;letter-spacing:0.121px;-webkit-text-stroke:0.68px #ad7a03;">POST</span>
<span class="t" style="left:313.58px;top:441.70px;font:400 24px/1 'Liberation Sans', sans-serif;color:#212121;letter-spacing:0.979px;">localhost:8089/api/neuron/met...</span>
<span class="t" style="left:858.43px;top:214.10px;font:400 24px/1 'Liberation Sans', sans-serif;color:#a6a6a6;letter-spacing:1.058px;">New Collection</span>
<span class="t" style="left:1044.50px;top:213.00px;font:400 28px/1 'Liberation Sans', sans-serif;color:#a6a6a6;letter-spacing:1.519px;">/</span>
<span class="t" style="left:1064.62px;top:215.10px;font:400 22.8px/1 'Liberation Sans', sans-serif;color:#212121;letter-spacing:2.129px;-webkit-text-stroke:0.91px #212121;">localhost:8085/api/neuron/write</span>
<span class="t" style="left:2178.81px;top:214.10px;font:400 24px/1 'Liberation Sans', sans-serif;color:#6b6b6b;letter-spacing:0.451px;">Save</span>
<span class="t" style="left:2340.21px;top:214.10px;font:400 24px/1 'Liberation Sans', sans-serif;color:#212121;letter-spacing:0.527px;">Share</span>
<span class="t" style="left:812.84px;top:320.20px;font:400 23.56px/1 'Liberation Sans', sans-serif;color:#ad7a03;letter-spacing:0.469px;-webkit-text-stroke:0.94px #ad7a03;">POST</span>
<span class="t" style="left:1038.08px;top:318.20px;font:400 24px/1 'Liberation Sans', sans-serif;color:#212121;letter-spacing:1.075px;">localhost:8085/api/neuron/write</span>
<span class="t" style="left:2264.70px;top:317.40px;font:400 27.55px/1 'Liberation Sans', sans-serif;color:#fff;letter-spacing:1.760px;-webkit-text-stroke:1.10px #fff;">Send</span>
<span class="t" style="left:790.69px;top:405.90px;font:400 24.5px/1 'Liberation Sans', sans-serif;color:#6b6b6b;letter-spacing:0.215px;">Params</span>
<span class="t" style="left:925.45px;top:405.90px;font:400 24.5px/1 'Liberation Sans', sans-serif;color:#6b6b6b;letter-spacing:0.710px;">Authorization</span>
<span class="t" style="left:1123.19px;top:405.90px;font:400 24.5px/1 'Liberation Sans', sans-serif;color:#6b6b6b;letter-spacing:0.598px;">Headers</span>
<span class="t" style="left:1228.18px;top:405.90px;font:400 24.5px/1 'Liberation Sans', sans-serif;color:#007f31;letter-spacing:-0.247px;">(10)</span>
<span class="t" style="left:1325.89px;top:405.90px;font:400 24.5px/1 'Liberation Sans', sans-serif;color:#212121;letter-spacing:1.038px;">Body</span>
<span class="t" style="left:1453.19px;top:405.90px;font:400 24.5px/1 'Liberation Sans', sans-serif;color:#6b6b6b;letter-spacing:0.751px;">Scripts</span>
<span class="t" style="left:1579.99px;top:405.90px;font:400 24.5px/1 'Liberation Sans', sans-serif;color:#6b6b6b;letter-spacing:0.695px;">Settings</span>
<span class="t" style="left:2329.78px;top:406.90px;font:400 23.27px/1 'Liberation Sans', sans-serif;color:#0265d2;letter-spacing:1.605px;-webkit-text-stroke:0.93px #0265d2;">Cookies</span>
<span class="t" style="left:840.97px;top:478.30px;font:400 24.5px/1 'Liberation Sans', sans-serif;color:#212121;letter-spacing:1.067px;">none</span>
<span class="t" style="left:964.95px;top:478.30px;font:400 24.5px/1 'Liberation Sans', sans-serif;color:#212121;letter-spacing:0.888px;">form-data</span>
<span class="t" style="left:1144.62px;top:478.30px;font:400 24.5px/1 'Liberation Sans', sans-serif;color:#212121;letter-spacing:1.220px;">x-www-form-urlencoded</span>
<span class="t" style="left:1493.97px;top:478.30px;font:400 24.5px/1 'Liberation Sans', sans-serif;color:#212121;letter-spacing:0.941px;">raw</span>
<span class="t" style="left:1601.82px;top:478.30px;font:400 24.5px/1 'Liberation Sans', sans-serif;color:#212121;letter-spacing:0.799px;">binary</span>
<span class="t" style="left:1738.77px;top:478.30px;font:400 24.5px/1 'Liberation Sans', sans-serif;color:#212121;letter-spacing:0.144px;">GraphQL</span>
<span class="t" style="left:1877.30px;top:479.30px;font:400 23.27px/1 'Liberation Sans', sans-serif;color:#0265d2;letter-spacing:0.956px;-webkit-text-stroke:0.93px #0265d2;">JSON</span>
<span class="t" style="left:2314.16px;top:479.30px;font:400 23.27px/1 'Liberation Sans', sans-serif;color:#0265d2;letter-spacing:1.792px;-webkit-text-stroke:0.93px #0265d2;">Beautify</span>
<span class="t" style="left:835.60px;top:556.00px;font:400 25px/1 'Liberation Mono', monospace;color:#237893;letter-spacing:-0.650px;">1</span>
<span class="t" style="left:835.60px;top:592.00px;font:400 25px/1 'Liberation Mono', monospace;color:#237893;letter-spacing:-0.650px;">2</span>
<span class="t" style="left:835.60px;top:628.00px;font:400 25px/1 'Liberation Mono', monospace;color:#237893;letter-spacing:-0.650px;">3</span>
<span class="t" style="left:835.60px;top:664.00px;font:400 25px/1 'Liberation Mono', monospace;color:#237893;letter-spacing:-0.650px;">4</span>
<span class="t" style="left:835.60px;top:700.00px;font:400 25px/1 'Liberation Mono', monospace;color:#237893;letter-spacing:-0.650px;">5</span>
<span class="t" style="left:835.60px;top:736.00px;font:400 25px/1 'Liberation Mono', monospace;color:#0b216f;letter-spacing:-0.650px;">6</span>
<span class="t" style="left:890.00px;top:556.00px;font:400 25px/1 'Liberation Mono', monospace;color:#1a1a1a;letter-spacing:-0.650px;">{</span>
<span class="t" style="left:890.00px;top:592.00px;font:400 25px/1 'Liberation Mono', monospace;color:#1a1a1a;letter-spacing:-0.650px;">  </span>
<span class="t" style="left:918.70px;top:592.00px;font:400 25px/1 'Liberation Mono', monospace;color:#a31515;letter-spacing:-0.650px;">"node"</span>
<span class="t" style="left:1004.80px;top:592.00px;font:400 25px/1 'Liberation Mono', monospace;color:#1a1a1a;letter-spacing:-0.650px;">: </span>
<span class="t" style="left:1033.50px;top:592.00px;font:400 25px/1 'Liberation Mono', monospace;color:#0451a5;letter-spacing:-0.650px;">"modbus1"</span>
<span class="t" style="left:1162.65px;top:592.00px;font:400 25px/1 'Liberation Mono', monospace;color:#1a1a1a;letter-spacing:-0.650px;">,</span>
<span class="t" style="left:890.00px;top:628.00px;font:400 25px/1 'Liberation Mono', monospace;color:#1a1a1a;letter-spacing:-0.650px;">  </span>
<span class="t" style="left:918.70px;top:628.00px;font:400 25px/1 'Liberation Mono', monospace;color:#a31515;letter-spacing:-0.650px;">"group"</span>
<span class="t" style="left:1019.15px;top:628.00px;font:400 25px/1 'Liberation Mono', monospace;color:#1a1a1a;letter-spacing:-0.650px;">: </span>
<span class="t" style="left:1047.85px;top:628.00px;font:400 25px/1 'Liberation Mono', monospace;color:#0451a5;letter-spacing:-0.650px;">"group1"</span>
<span class="t" style="left:1162.65px;top:628.00px;font:400 25px/1 'Liberation Mono', monospace;color:#1a1a1a;letter-spacing:-0.650px;">,</span>
<span class="t" style="left:890.00px;top:664.00px;font:400 25px/1 'Liberation Mono', monospace;color:#1a1a1a;letter-spacing:-0.650px;">  </span>
<span class="t" style="left:918.70px;top:664.00px;font:400 25px/1 'Liberation Mono', monospace;color:#a31515;letter-spacing:-0.650px;">"tag"</span>
<span class="t" style="left:990.45px;top:664.00px;font:400 25px/1 'Liberation Mono', monospace;color:#1a1a1a;letter-spacing:-0.650px;">: </span>
<span class="t" style="left:1019.15px;top:664.00px;font:400 25px/1 'Liberation Mono', monospace;color:#0451a5;letter-spacing:-0.650px;">"tag1"</span>
<span class="t" style="left:1105.25px;top:664.00px;font:400 25px/1 'Liberation Mono', monospace;color:#1a1a1a;letter-spacing:-0.650px;">,</span>
<span class="t" style="left:890.00px;top:700.00px;font:400 25px/1 'Liberation Mono', monospace;color:#1a1a1a;letter-spacing:-0.650px;">  </span>
<span class="t" style="left:918.70px;top:700.00px;font:400 25px/1 'Liberation Mono', monospace;color:#a31515;letter-spacing:-0.650px;">"value"</span>
<span class="t" style="left:1019.15px;top:700.00px;font:400 25px/1 'Liberation Mono', monospace;color:#1a1a1a;letter-spacing:-0.650px;">: </span>
<span class="t" style="left:1047.85px;top:700.00px;font:400 25px/1 'Liberation Mono', monospace;color:#098658;letter-spacing:-0.650px;">12</span>
<span class="t" style="left:890.00px;top:736.00px;font:400 25px/1 'Liberation Mono', monospace;color:#1a1a1a;letter-spacing:-0.650px;">}</span>
<span class="t" style="left:790.73px;top:988.60px;font:400 24px/1 'Liberation Sans', sans-serif;color:#212121;letter-spacing:1.304px;">Body</span>
<span class="t" style="left:881.48px;top:988.60px;font:400 24px/1 'Liberation Sans', sans-serif;color:#6b6b6b;letter-spacing:0.895px;">Cookies</span>
<span class="t" style="left:1004.23px;top:988.60px;font:400 24px/1 'Liberation Sans', sans-serif;color:#6b6b6b;letter-spacing:1.036px;">Headers</span>
<span class="t" style="left:1109.91px;top:988.60px;font:400 24px/1 'Liberation Sans', sans-serif;color:#007f31;letter-spacing:1.166px;">(6)</span>
<span class="t" style="left:1174.16px;top:988.60px;font:400 24px/1 'Liberation Sans', sans-serif;color:#6b6b6b;letter-spacing:0.581px;">Test Results</span>
<span class="t" style="left:1726.79px;top:988.60px;font:400 24px/1 'Liberation Sans', sans-serif;color:#007f31;letter-spacing:1.417px;-webkit-text-stroke:0.38px #007f31;">200 OK</span>
<span class="t" style="left:1871.88px;top:988.60px;font:400 24px/1 'Liberation Sans', sans-serif;color:#6b6b6b;letter-spacing:1.326px;">9 ms</span>
<span class="t" style="left:1968.19px;top:988.60px;font:400 24px/1 'Liberation Sans', sans-serif;color:#6b6b6b;letter-spacing:1.488px;">247 B</span>
<span class="t" style="left:2155.97px;top:992.50px;font:700 15.5px/1 'Liberation Serif', serif;color:#6b6b6b;letter-spacing:0.273px;">e.g.</span>
<span class="t" style="left:2194.41px;top:988.60px;font:400 24px/1 'Liberation Sans', sans-serif;color:#6b6b6b;letter-spacing:0.375px;">Save Response</span>
<span class="t" style="left:810.31px;top:1055.00px;font:400 29.5px/1 'Liberation Sans', sans-serif;color:#212121;letter-spacing:1.849px;">{</span>
<span class="t" style="left:826.71px;top:1055.00px;font:400 29.5px/1 'Liberation Sans', sans-serif;color:#212121;letter-spacing:1.963px;">}</span>
<span class="t" style="left:852.62px;top:1061.30px;font:400 24px/1 'Liberation Sans', sans-serif;color:#212121;letter-spacing:0.239px;">JSON</span>
<span class="t" style="left:1039.53px;top:1061.30px;font:400 24px/1 'Liberation Sans', sans-serif;color:#6b6b6b;letter-spacing:0.842px;">Preview</span>
<span class="t" style="left:1215.49px;top:1061.30px;font:400 24px/1 'Liberation Sans', sans-serif;color:#6b6b6b;letter-spacing:0.506px;">Visualize</span>
<span class="t" style="left:849.80px;top:1121.10px;font:400 25px/1 'Liberation Mono', monospace;color:#237893;letter-spacing:-0.650px;">1</span>
<span class="t" style="left:849.80px;top:1157.10px;font:400 25px/1 'Liberation Mono', monospace;color:#237893;letter-spacing:-0.650px;">2</span>
<span class="t" style="left:849.80px;top:1193.10px;font:400 25px/1 'Liberation Mono', monospace;color:#0b216f;letter-spacing:-0.650px;">3</span>
<span class="t" style="left:904.30px;top:1121.10px;font:400 25px/1 'Liberation Mono', monospace;color:#1a1a1a;letter-spacing:-0.650px;">{</span>
<span class="t" style="left:904.30px;top:1157.10px;font:400 25px/1 'Liberation Mono', monospace;color:#1a1a1a;letter-spacing:-0.650px;">    </span>
<span class="t" style="left:961.70px;top:1157.10px;font:400 25px/1 'Liberation Mono', monospace;color:#a31515;letter-spacing:-0.650px;">"error"</span>
<span class="t" style="left:1062.15px;top:1157.10px;font:400 25px/1 'Liberation Mono', monospace;color:#1a1a1a;letter-spacing:-0.650px;">: </span>
<span class="t" style="left:1090.85px;top:1157.10px;font:400 25px/1 'Liberation Mono', monospace;color:#098658;letter-spacing:-0.650px;">0</span>
<span class="t" style="left:904.30px;top:1193.10px;font:400 25px/1 'Liberation Mono', monospace;color:#1a1a1a;letter-spacing:-0.650px;">}</span>
<span class="t" style="left:95.78px;top:1566.10px;font:400 21.6px/1 'Liberation Sans', sans-serif;color:#6b6b6b;letter-spacing:0.712px;">Online</span>
<span class="t" style="left:216.73px;top:1566.10px;font:400 21.6px/1 'Liberation Sans', sans-serif;color:#6b6b6b;letter-spacing:0.891px;">Find and replace</span>
<span class="t" style="left:445.90px;top:1566.10px;font:400 21.6px/1 'Liberation Sans', sans-serif;color:#6b6b6b;letter-spacing:1.004px;">Console</span>
<span class="t" style="left:1645.83px;top:1566.10px;font:400 21.6px/1 'Liberation Sans', sans-serif;color:#6534ad;letter-spacing:1.549px;">Postbot</span>
<span class="t" style="left:1790.83px;top:1566.10px;font:400 21.6px/1 'Liberation Sans', sans-serif;color:#6b6b6b;letter-spacing:0.900px;">Runner</span>
<span class="t" style="left:1929.72px;top:1566.10px;font:400 21.6px/1 'Liberation Sans', sans-serif;color:#6b6b6b;letter-spacing:0.901px;">Start Proxy</span>
<span class="t" style="left:2109.70px;top:1566.10px;font:400 21.6px/1 'Liberation Sans', sans-serif;color:#6b6b6b;letter-spacing:1.094px;">Cookies</span>
<span class="t" style="left:2258.21px;top:1566.10px;font:400 21.6px/1 'Liberation Sans', sans-serif;color:#6b6b6b;letter-spacing:0.882px;">Vault</span>
<span class="t" style="left:2374.41px;top:1566.10px;font:400 21.6px/1 'Liberation Sans', sans-serif;color:#6b6b6b;letter-spacing:0.920px;">Trash</span>
<span class="t" style="left:2526.82px;top:1566.60px;font:400 19px/1 'Liberation Sans', sans-serif;color:#6b6b6b;letter-spacing:-0.694px;">?</span>
</div>
</div></body></html>
